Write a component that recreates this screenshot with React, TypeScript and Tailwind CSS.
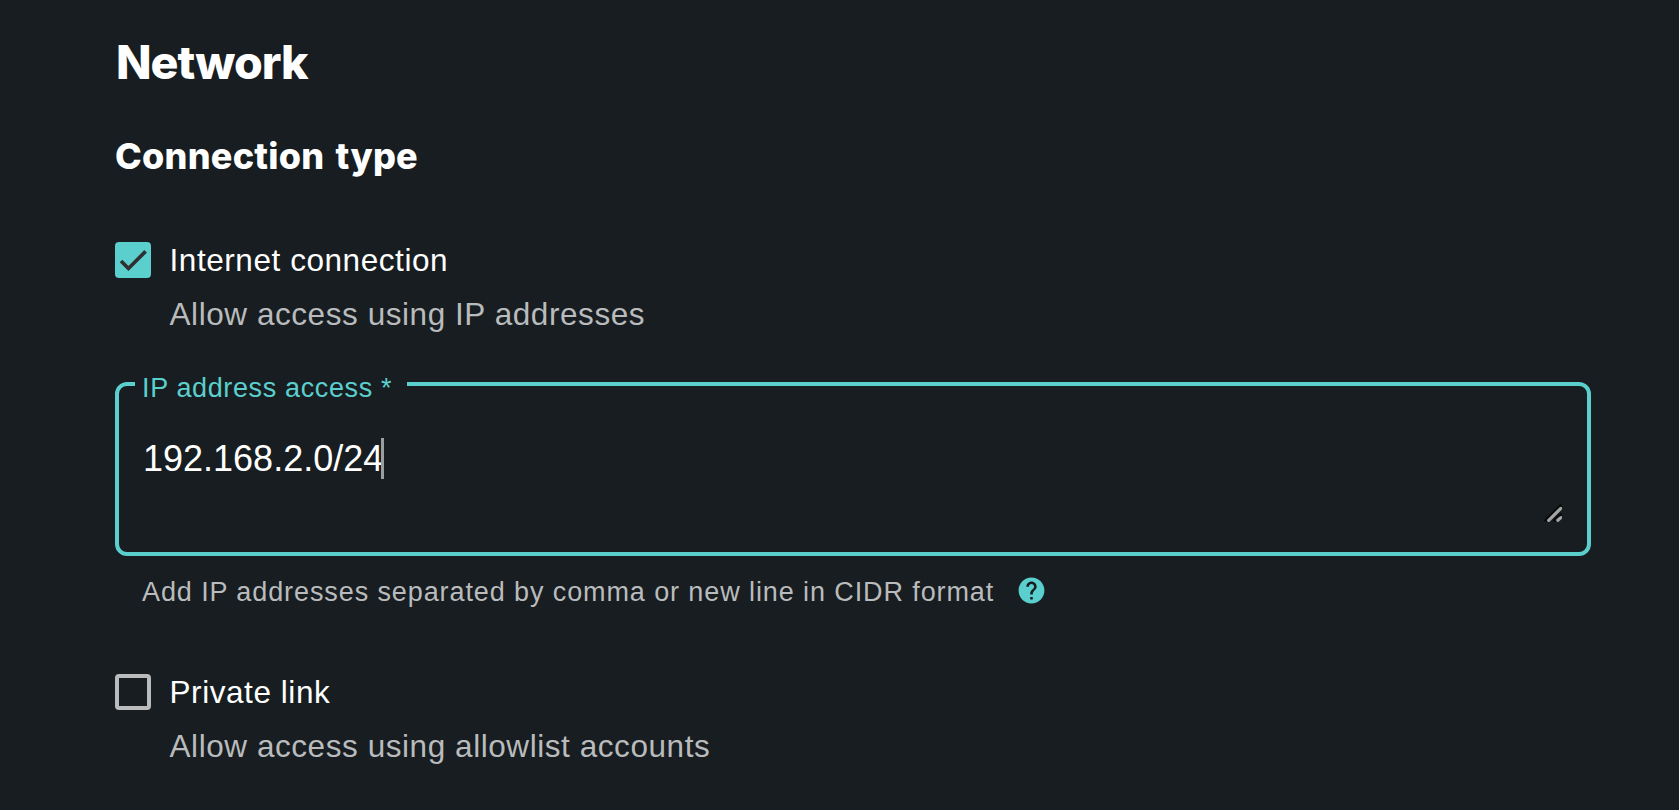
import { MdHelp } from "react-icons/md";

type OptionProps = { checked?: boolean; title: string; description: string };

function ConnectionOption({ checked = false, title, description }: OptionProps) {
  return (
    <div className="flex items-start gap-[18.5px] text-[31.5px] leading-[36px] tracking-[0.5625px]">
      {checked ? (
        <div className="h-9 w-9 shrink-0 rounded-[4px] bg-[#5bcfcd] p-1">
          <svg viewBox="0 0 24 24" className="h-7 w-7" fill="none" stroke="#303030" strokeWidth="3.12">
            <path d="M1.73,12.91 8.1,19.28 22.79,4.59" />
          </svg>
        </div>
      ) : (
        <div className="h-9 w-9 shrink-0 rounded-[4px] border-4 border-[#babbbc]" />
      )}
      <div className="whitespace-nowrap">
        <div className="text-white">{title}</div>
        <div className="mt-[18px] text-[#b9bbbc]">{description}</div>
      </div>
    </div>
  );
}

export default function App() {
  return (
    <main className="flex h-[810px] w-[1679px] flex-col overflow-hidden bg-[#171d20] pl-[115px] font-['Liberation_Sans',Arial,sans-serif]">
      <h1 className="mt-[34px] pl-px font-['Inter',sans-serif] text-[46.5px] leading-[56px] font-extrabold tracking-[-1px] text-white">
        Network
      </h1>
      <h2 className="mt-[44px] font-['Inter',sans-serif] text-[36px] leading-[44px] font-extrabold tracking-[0.25px] text-white [word-spacing:3px]">
        Connection type
      </h2>
      <div className="mt-[64px]">
        <ConnectionOption checked title="Internet connection" description="Allow access using IP addresses" />
      </div>
      <div className="relative mt-[50px] h-[174px] w-[1476px] shrink-0 rounded-[12px] border-4 border-[#5bcfcd]">
        <div className="absolute -top-[15px] left-[16px] h-[36px] w-[272px] bg-[#171d20] pl-[7px] text-[27px] leading-[34px] tracking-[0.63px] whitespace-nowrap text-[#5bcfcd]">
          IP address access *
        </div>
        <div className="flex items-center pt-[52px] pl-[24px] text-[36px] leading-[41px] text-white">
          192.168.2.0/24
          <span className="-ml-[2px] h-[41px] w-[3px] bg-[#9a9ea1]" />
        </div>
        <svg className="absolute top-[118px] left-[1425px] h-[18px] w-[18px]" viewBox="0 0 18 18" strokeLinecap="round" fill="none">
          <path d="M1.8 16.2 16.5 1.8M10.5 16.5 16.5 10.5" stroke="#07090a" strokeWidth="3" />
          <path d="M4.7 16.3 16.8 4.4M13.8 16.3 16.8 13.6" stroke="#a5a5a5" strokeWidth="3.2" />
        </svg>
      </div>
      <div className="mt-[20px] flex h-[32px] items-center pl-[27px] text-[27px] leading-[32px] tracking-[0.9px] whitespace-nowrap text-[#b9bbbc]">
        Add IP addresses separated by comma or new line in CIDR format
        <MdHelp className="mb-[3px] ml-[22px] h-[31px] w-[31px] text-[#5bcfcd]" />
      </div>
      <div className="mt-[66px]">
        <ConnectionOption title="Private link" description="Allow access using allowlist accounts" />
      </div>
    </main>
  );
}
